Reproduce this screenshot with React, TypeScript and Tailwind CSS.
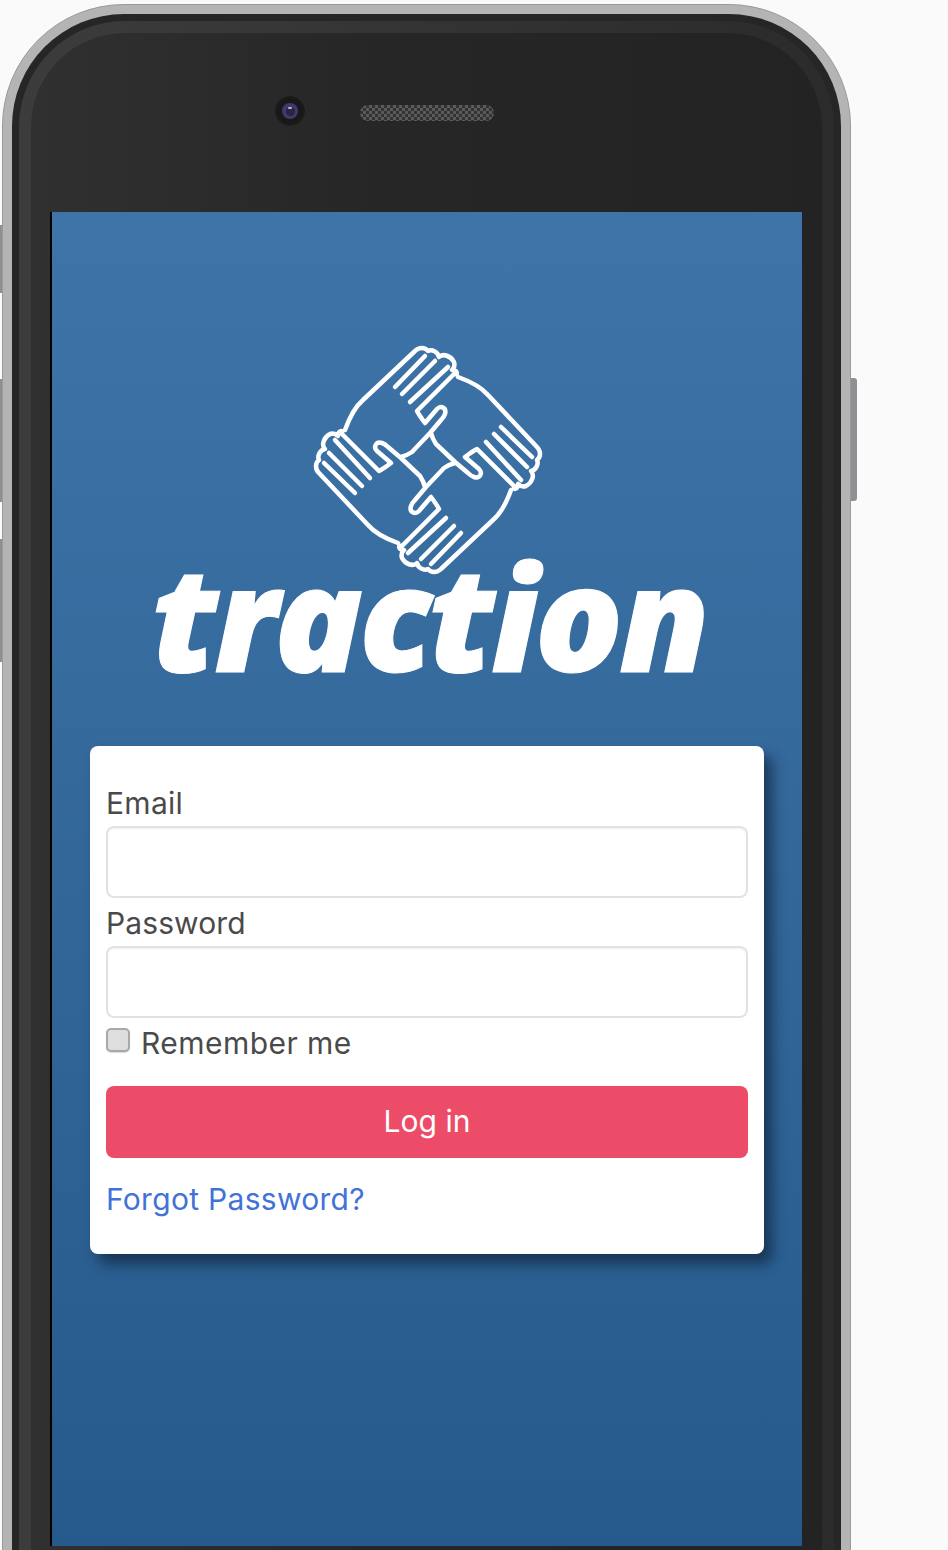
const handOutline =
  "M-83 -30C-78 -44 -72 -54 -65 -60L-13 -109C-9 -113 -3 -113 0 -109C4 -111 10 -108 11 -103C15 -107 23 -104 26 -98C27 -95 26 -92 24 -90C29 -90 31 -85 26 -86L-11 -49C-9 -45 -6 -41 -3 -37L9 -51C13 -55 19 -52 17 -46C16 -43 15 -42 13 -40L2 -27L-16 -8C-19 -6 -23 -4 -27 -3";
const fingerLines = ["M-33 -73L-3 -104", "M-26 -66L7 -99", "M-18 -58L20 -93"];

function Hand({ angle }: { angle: number }) {
  return (
    <g transform={`rotate(${angle})`}>
      <path d={handOutline} />
      {fingerLines.map((d) => (
        <path key={d} d={d} />
      ))}
    </g>
  );
}

function HandsLogo() {
  return (
    <svg
      viewBox="-125 -125 250 250"
      className="h-[250px] w-[250px]"
      fill="none"
      stroke="white"
      strokeWidth="4.5"
      strokeLinecap="round"
      strokeLinejoin="round"
    >
      <g transform="translate(1 0)">
        {[0, 90, 180, 270].map((angle) => (
          <Hand key={angle} angle={angle} />
        ))}
      </g>
    </svg>
  );
}

function Camera() {
  return (
    <div className="relative flex h-[30px] w-[30px] items-center justify-center rounded-full bg-[radial-gradient(circle,#181818_55%,#252525_100%)]">
      <div className="flex h-[16px] w-[16px] items-center justify-center rounded-full bg-[#43386e]">
        <div className="h-[9px] w-[9px] rounded-full bg-[#2a2440]" />
      </div>
      <div className="absolute left-[13px] top-[11px] h-[2px] w-[4px] rounded-full bg-[#b9b4c8]" />
    </div>
  );
}

function SideButton({ className }: { className: string }) {
  return <div className={`absolute bg-[#8f8f94] ${className}`} />;
}

const labelClass = "block h-[48px] pt-[5px] text-[30px] leading-[40px] text-[#4a4a4a]";
const inputClass =
  "block h-[72px] w-full rounded-[8px] border-2 border-[#e2e2e2] bg-white shadow-[inset_0_1px_2px_rgba(0,0,0,0.06)]";

export default function App() {
  return (
    <div className="relative h-[1550px] w-[948px] overflow-hidden bg-[#fafafa] font-['Inter','Liberation_Sans',sans-serif]">
      <SideButton className="left-0 top-[225px] h-[68px] w-[2px]" />
      <SideButton className="left-0 top-[379px] h-[123px] w-[2px]" />
      <SideButton className="left-0 top-[539px] h-[123px] w-[2px]" />
      <SideButton className="left-[851px] top-[378px] h-[123px] w-[6px] rounded-r-[3px]" />

      <div className="ml-[2px] mt-[4px] h-[1700px] w-[849px] rounded-[122px] border border-[#9a9a9a] bg-[#b4b4b4] p-[9px]">
        <div className="h-full rounded-[112px] bg-[#262626] p-[7px]">
          <div className="h-full rounded-[106px] bg-[linear-gradient(90deg,#3c3c3c_0%,#2b2b2b_100%)] p-[12px]">
            <div className="h-full rounded-[94px] bg-[linear-gradient(90deg,#303030_0%,#262626_45%,#232323_100%)] px-[19px] pt-[63px]">
              <div className="mb-[88px] flex h-[30px] items-start gap-[55px] pl-[225px]">
                <Camera />
                <div className="mt-[9px] h-[16px] w-[134px] rounded-full bg-[repeating-conic-gradient(#5a5a5a_0%_25%,#333333_0%_50%)] bg-[length:6px_6px]" />
              </div>

              <div className="h-[1334px] w-[752px] border-b-2 border-l-2 border-black">
                <div className="-mt-[2px] flex h-[1334px] w-[750px] flex-col items-center bg-[linear-gradient(180deg,#3f74a8_0%,#265a8c_100%)]">
                  <div className="mt-[123px] h-[250px] w-[250px]">
                    <HandsLogo />
                  </div>
                  <div className="-mt-[49px] ml-[4px] h-[160px] text-[146px] font-extrabold italic leading-[160px] tracking-[-4px] text-white font-['Open_Sans',sans-serif] [-webkit-text-stroke:1px_white]">
                    traction
                  </div>

                  <div className="mt-[50px] h-[508px] w-[674px] rounded-[8px] bg-white px-[16px] pt-[32px] shadow-[8px_10px_14px_rgba(15,35,60,0.7)]">
                    <label className={`${labelClass} tracking-[0.3px]`}>Email</label>
                    <input className={inputClass} />
                    <label className={`${labelClass} tracking-[0.1px]`}>Password</label>
                    <input className={inputClass} />
                    <label className="mt-[5px] flex h-[40px] items-start text-[30px] leading-[40px] tracking-[0.45px] text-[#4a4a4a]">
                      <span className="mr-[11px] mt-[5px] h-[24px] w-[24px] rounded-[5px] border-2 border-[#a8a8a8] bg-[#dedede] shadow-[0_1px_1px_rgba(0,0,0,0.15)]" />
                      Remember me
                    </label>
                    <button className="mt-[23px] block h-[72px] w-full rounded-[8px] bg-[#ec4c68] pb-[2px] text-[30px] text-white">
                      Log in
                    </button>
                    <a className="mt-[21px] block text-[30px] leading-[40px] tracking-[0.3px] text-[#4272d7]">Forgot Password?</a>
                  </div>
                </div>
              </div>
            </div>
          </div>
        </div>
      </div>
    </div>
  );
}
